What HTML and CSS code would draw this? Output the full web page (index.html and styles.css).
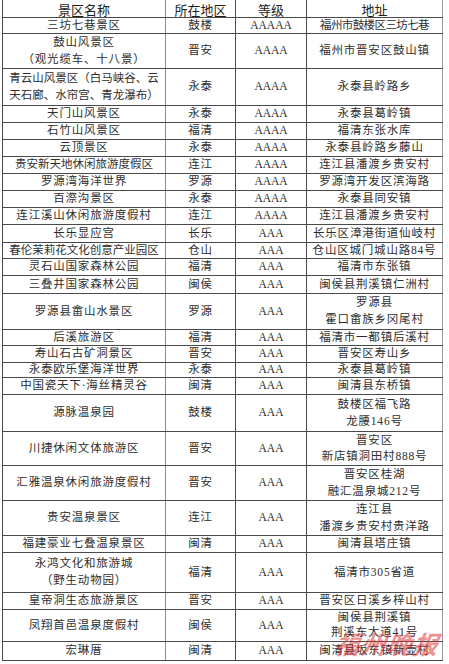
FILE: index.html
```html
<!DOCTYPE html>
<html lang="zh-CN">
<head>
<meta charset="utf-8">
<title>福州A级景区</title>
<link rel="stylesheet" href="styles.css">
</head>
<body>
<div class="page">
<table class="sites">
<colgroup><col class="c-name"><col class="c-area"><col class="c-grade"><col class="c-addr"></colgroup>
<thead>
<tr class="head"><th>景区名称</th><th>所在地区</th><th>等级</th><th>地址</th></tr>
</thead>
<tbody>
<tr class="s16"><td>三坊七巷景区</td><td>鼓楼</td><td class="g">AAAAA</td><td class="tight">福州市鼓楼区三坊七巷</td></tr>
<tr class="d35"><td class="ml">鼓山风景区<br>（观光缆车、十八景）</td><td>晋安</td><td class="g">AAAA</td><td>福州市晋安区鼓山镇</td></tr>
<tr class="d37"><td class="ml long">青云山风景区（白马峡谷、云<br>天石廊、水帘宫、青龙瀑布）</td><td>永泰</td><td class="g">AAAA</td><td>永泰县岭路乡</td></tr>
<tr class="s17"><td>天门山风景区</td><td>永泰</td><td class="g">AAAA</td><td>永泰县葛岭镇</td></tr>
<tr class="s17"><td>石竹山风景区</td><td>福清</td><td class="g">AAAA</td><td>福清东张水库</td></tr>
<tr class="s17"><td>云顶景区</td><td>永泰</td><td class="g">AAAA</td><td>永泰县岭路乡藤山</td></tr>
<tr class="s17"><td class="long">贵安新天地休闲旅游度假区</td><td>连江</td><td class="g">AAAA</td><td>连江县潘渡乡贵安村</td></tr>
<tr class="s17"><td>罗源湾海洋世界</td><td>罗源</td><td class="g">AAAA</td><td>罗源湾开发区滨海路</td></tr>
<tr class="s17"><td>百漈沟景区</td><td>永泰</td><td class="g">AAAA</td><td>永泰县同安镇</td></tr>
<tr class="s17"><td>连江溪山休闲旅游度假村</td><td>连江</td><td class="g">AAAA</td><td>连江县潘渡乡贵安村</td></tr>
<tr class="s18"><td>长乐显应宫</td><td>长乐</td><td class="g">AAA</td><td>长乐区漳港街道仙岐村</td></tr>
<tr class="s16"><td class="long">春伦茉莉花文化创意产业园区</td><td>仓山</td><td class="g">AAA</td><td>仓山区城门城山路84号</td></tr>
<tr class="s17"><td>灵石山国家森林公园</td><td>福清</td><td class="g">AAA</td><td>福清市东张镇</td></tr>
<tr class="s18"><td>三叠井国家森林公园</td><td>闽侯</td><td class="g">AAA</td><td>闽侯县荆溪镇仁洲村</td></tr>
<tr class="d36"><td>罗源县畲山水景区</td><td>罗源</td><td class="g">AAA</td><td class="ml two">罗源县<br>霍口畲族乡冈尾村</td></tr>
<tr class="s16"><td>后溪旅游区</td><td>福清</td><td class="g">AAA</td><td>福清市一都镇后溪村</td></tr>
<tr class="s17"><td>寿山石古矿洞景区</td><td>晋安</td><td class="g">AAA</td><td>晋安区寿山乡</td></tr>
<tr class="s15"><td>永泰欧乐堡海洋世界</td><td>永泰</td><td class="g">AAA</td><td>永泰县葛岭镇</td></tr>
<tr class="s17"><td>中国瓷天下·海丝精灵谷</td><td>闽清</td><td class="g">AAA</td><td>闽清县东桥镇</td></tr>
<tr class="d37"><td>源脉温泉园</td><td>鼓楼</td><td class="g">AAA</td><td class="ml two">鼓楼区福飞路<br>龙腰146号</td></tr>
<tr class="d34"><td>川捷休闲文体旅游区</td><td>晋安</td><td class="g">AAA</td><td class="ml snug">晋安区<br>新店镇洞田村888号</td></tr>
<tr class="d35"><td>汇雅温泉休闲旅游度假村</td><td>晋安</td><td class="g">AAA</td><td class="ml two">晋安区桂湖<br>融汇温泉城212号</td></tr>
<tr class="d35"><td>贵安温泉景区</td><td>连江</td><td class="g">AAA</td><td class="ml two">连江县<br>潘渡乡贵安村贵洋路</td></tr>
<tr class="s17"><td>福建豪业七叠温泉景区</td><td>闽清</td><td class="g">AAA</td><td>闽清县塔庄镇</td></tr>
<tr class="d40"><td class="ml">永鸿文化和旅游城<br>（野生动物园）</td><td>福清</td><td class="g">AAA</td><td>福清市305省道</td></tr>
<tr class="s17"><td>皇帝洞生态旅游景区</td><td>晋安</td><td class="g">AAA</td><td>晋安区日溪乡梓山村</td></tr>
<tr class="d32"><td>凤翔首邑温泉度假村</td><td>闽侯</td><td class="g">AAA</td><td class="ml tight2">闽侯县荆溪镇<br>荆溪东大道41号</td></tr>
<tr class="s19"><td>宏琳厝</td><td>闽清</td><td class="g">AAA</td><td>闽清县坂东镇新壶村</td></tr>
</tbody>
</table>
<div class="stamp">福州晚报</div>
</div>
</body>
</html>
```

FILE: styles.css
```css
html, body {
  margin: 0;
  padding: 0;
  background: #ffffff;
}

body {
  width: 449px;
  height: 664px;
  overflow: hidden;
}

.page {
  position: relative;
  width: 449px;
  height: 664px;
  padding-left: 2px;
  box-sizing: border-box;
  overflow: hidden;
}

.sites {
  width: 440px;
  border-collapse: collapse;
  table-layout: fixed;
  font-family: "Liberation Serif", "Noto Sans CJK SC", serif;
  color: #2e2e2e;
}

.c-name { width: 163px; }
.c-area { width: 70px; }
.c-grade { width: 71px; }
.c-addr { width: 136px; }

.sites th,
.sites td {
  padding: 0;
  text-align: center;
  vertical-align: middle;
  border: 1px solid #4a4a4a;
  white-space: nowrap;
}

.sites th {
  border-top: none;
  font-family: "Noto Sans CJK SC", sans-serif;
  font-weight: 400;
  font-size: 13px;
  line-height: 13px;
  padding-top: 3px;
  vertical-align: top;
  color: #1e1e1e;
}

.sites td {
  font-size: 11.5px;
  line-height: 13px;
  letter-spacing: 0.8px;
  font-weight: 400;
}

.sites td.ml {
  line-height: 17px;
}

.sites td.two {
  line-height: 17px;
}

.sites td.snug {
  line-height: 16px;
}

.sites td.tight2 {
  line-height: 15px;
}

.sites th:first-child,
.sites td:first-child {
  border-right: 1.5px solid #8a8a8a;
}

.sites th:last-child,
.sites td:last-child {
  border-right: 1px solid #9a9a9a;
}

.sites td.long {
  letter-spacing: 0;
}

.sites td.tight {
  letter-spacing: -0.6px;
}

.sites td.g {
  font-family: "Liberation Serif", serif;
  font-size: 11.5px;
  letter-spacing: 0;
}

.head { height: 17px; }
.s15 { height: 15px; }
.s16 { height: 16px; }
.s17 { height: 17px; }
.s18 { height: 18px; }
.s19 { height: 19px; }
.d32 { height: 32px; }
.d34 { height: 34px; }
.d35 { height: 35px; }
.d36 { height: 36px; }
.d37 { height: 37px; }
.d39 { height: 39px; }
.d40 { height: 40px; }

.stamp {
  position: absolute;
  right: 10px;
  top: 628px;
  font-family: "Noto Sans CJK SC", sans-serif;
  font-weight: 700;
  font-style: italic;
  font-size: 25px;
  line-height: 30px;
  letter-spacing: 1px;
  color: rgba(222, 50, 50, 0.55);
  transform: skewX(-8deg);
  pointer-events: none;
}
```
